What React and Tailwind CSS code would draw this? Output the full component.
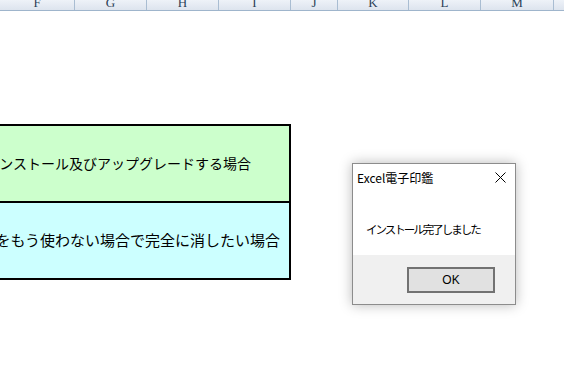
import React from "react";

const columns = [
    { label: "F", w: "w-[75px]" },
    { label: "G", w: "w-[72px]" },
    { label: "H", w: "w-[72px]" },
    { label: "I", w: "w-[72px]" },
    { label: "J", w: "w-[47px]" },
    { label: "K", w: "w-[71px]" },
    { label: "L", w: "w-[72px]" },
    { label: "M", w: "w-[73px]" },
];

const ColumnHeader = () => (
    <div className="flex h-[11px] bg-gradient-to-b from-[#eef2f8] to-[#dde4ee] border-b border-[#9fb5cc] overflow-hidden">
        {columns.map((col) => (
            <div
                key={col.label}
                className={`${col.w} shrink-0 h-full flex items-end justify-center border-r border-[#a9bdd2] overflow-hidden`}
            >
                <span className="text-[13px] leading-none mb-[1px] text-[#2a3f56] font-['Liberation_Serif',serif]">
                    {col.label}
                </span>
            </div>
        ))}
        <div className="flex-1" />
    </div>
);

const SheetTable = () => (
    <div className="w-[291px] shrink-0 mt-[113px] border-y-2 border-r-2 border-black text-black font-['Noto_Sans_CJK_JP',sans-serif] overflow-hidden">
        <div className="h-[75px] bg-[#ccffcc] flex items-center justify-end pr-[38px] whitespace-nowrap text-[14px]">
            インストール及びアップグレードする場合
        </div>
        <div className="h-[2px] bg-black" />
        <div className="h-[75px] bg-[#ccffff] flex items-center justify-end pr-[9px] whitespace-nowrap text-[15px]">
            Excel電子印鑑をもう使わない場合で完全に消したい場合
        </div>
    </div>
);

const MessageBox = () => (
    <div className="ml-[61px] mt-[152px] w-[164px] h-[142px] shrink-0 border border-[#8c8c8c] bg-white flex flex-col shadow-[0_0_12px_rgba(0,0,0,0.28)] font-['Noto_Sans_CJK_JP',sans-serif]">
        {/* title bar */}
        <div className="h-[27px] flex items-center justify-between pl-[4px] pr-[9px]">
            <span className="text-[12px] text-black leading-none">Excel電子印鑑</span>
            <svg width="11" height="11" viewBox="0 0 11 11" className="text-black">
                <path d="M0.5 0.5 L10.5 10.5 M10.5 0.5 L0.5 10.5" stroke="currentColor" strokeWidth="1" />
            </svg>
        </div>
        {/* message */}
        <div className="flex-1 pl-[13px] pt-[24px]">
            <span className="text-[11.5px] text-black leading-none tracking-[-2px] whitespace-nowrap">
                インストール完了しました
            </span>
        </div>
        {/* footer */}
        <div className="h-[49px] bg-[#f0f0f0] flex justify-end pt-[12px] pr-[20px]">
            <button className="w-[88px] h-[26px] bg-[#e1e1e1] border-[2px] border-[#727272] text-[12px] text-black font-['Liberation_Sans',sans-serif] flex items-center justify-center">
                OK
            </button>
        </div>
    </div>
);

export default function App() {
    return (
        <div className="w-[564px] h-[377px] bg-white overflow-hidden">
            <ColumnHeader />
            <div className="flex items-start">
                <SheetTable />
                <MessageBox />
            </div>
        </div>
    );
}
